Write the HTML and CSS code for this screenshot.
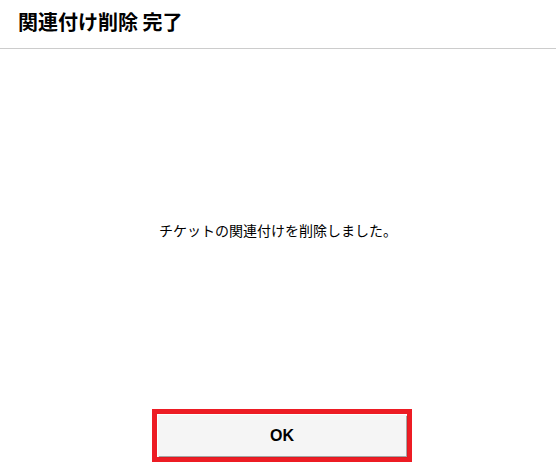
FILE: index.html
```html
<!DOCTYPE html>
<html lang="ja">
<head>
    <meta charset="UTF-8">
    <link rel="stylesheet" href="styles.css">
    <title>関連付け削除 完了</title>
</head>
<body>
    <div class="dialog">
        <div class="dialog-header">
            <h1 class="dialog-title">関連付け削除 完了</h1>
        </div>
        <div class="dialog-body">
            <p class="message">チケットの関連付けを削除しました。</p>
        </div>
        <div class="dialog-footer">
            <div class="ok-frame">
                <button class="ok-button">OK</button>
            </div>
        </div>
    </div>
</body>
</html>
```

FILE: styles.css
```css
body {
    margin: 0;
    background-color: #fff;
    font-family: "Noto Sans CJK JP", "Liberation Sans", sans-serif;
    color: #000;
}

.dialog {
    width: 556px;
    height: 476px;
}

.dialog-header {
    height: 48px;
    border-bottom: 1px solid #cccccc;
    display: flex;
    align-items: center;
    padding-left: 18px;
}

.dialog-title {
    margin: 0;
    font-size: 20px;
    font-weight: bold;
    line-height: 1;
    margin-top: -5px;
}

.dialog-body {
    height: 360px;
    display: flex;
    align-items: center;
    justify-content: center;
}

.message {
    margin: 0;
    font-size: 14px;
    line-height: 1;
    margin-top: 1px;
}

.dialog-footer {
    display: flex;
    justify-content: center;
    padding-left: 8px;
}

.ok-frame {
    border: 5px solid #ed1c24;
    padding: 1px;
    background-color: #fff;
}

.ok-button {
    display: block;
    width: 248px;
    height: 41px;
    border: none;
    background-color: #f5f5f5;
    box-shadow: 1px 1px 1px rgba(0, 0, 0, 0.35);
    font-family: "Liberation Sans", "Noto Sans CJK JP", sans-serif;
    font-size: 16px;
    font-weight: bold;
    color: #000;
    padding: 0;
    cursor: pointer;
}
```
